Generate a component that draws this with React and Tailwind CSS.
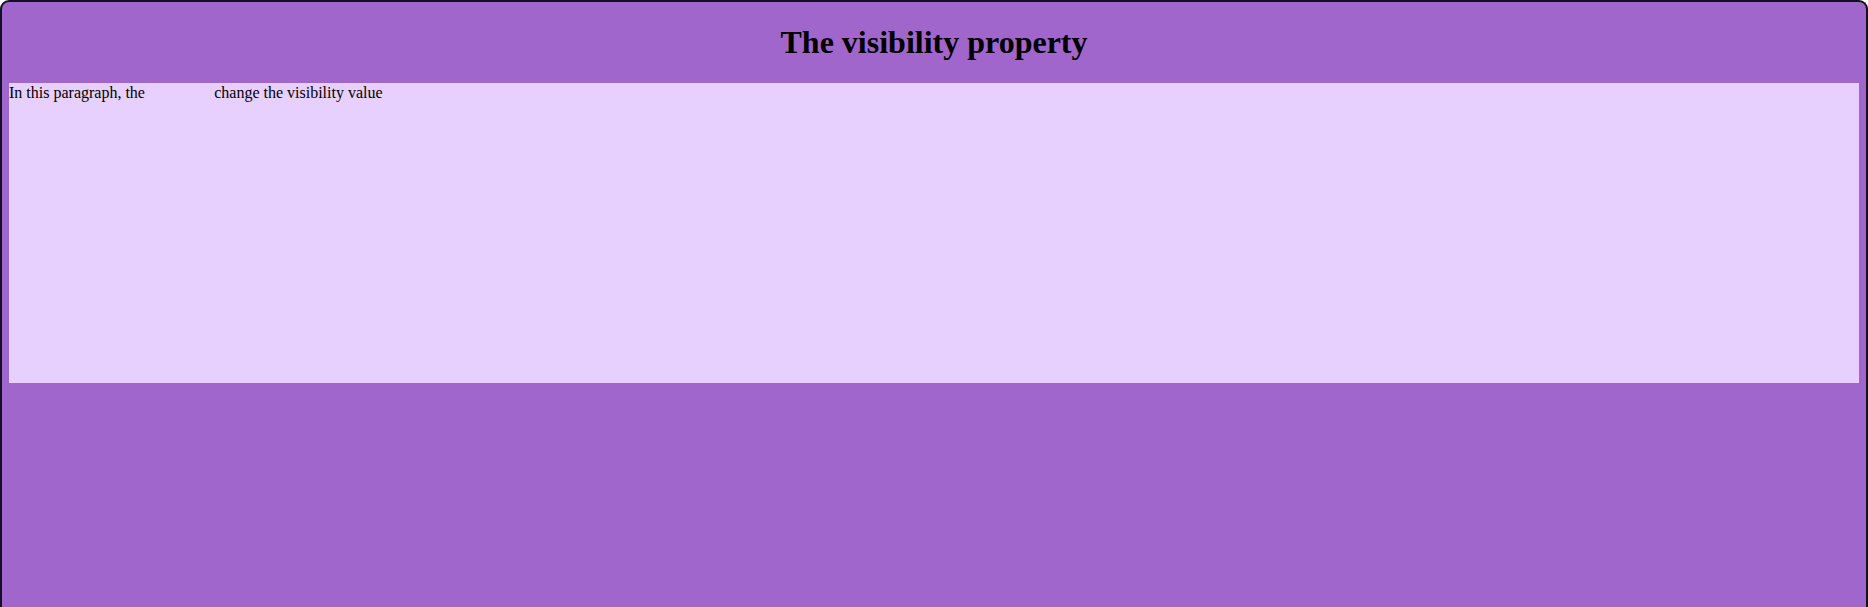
import React from 'react';

/**
 * Demo page for the CSS visibility property.
 * The hidden span still takes its space in the line.
 */
export default function App() {
  return (
    <div
      className="h-[607px] overflow-hidden rounded-t-[9px] border-2 border-b-0 border-[#15101f] bg-[#a066cb] px-[7px] text-black"
      style={{ fontFamily: '"Liberation Serif", "Times New Roman", serif' }}
    >
      <h1 className="mt-[22px] mb-[22px] text-center text-[32px] font-bold leading-[37px]">
        The visibility property
      </h1>
      <p className="h-[300px] bg-[#e8d0fe] text-base leading-[19px]">
        In this paragraph, the <span className="invisible pl-[3px]">is hidden</span> change the visibility value
      </p>
    </div>
  );
}
